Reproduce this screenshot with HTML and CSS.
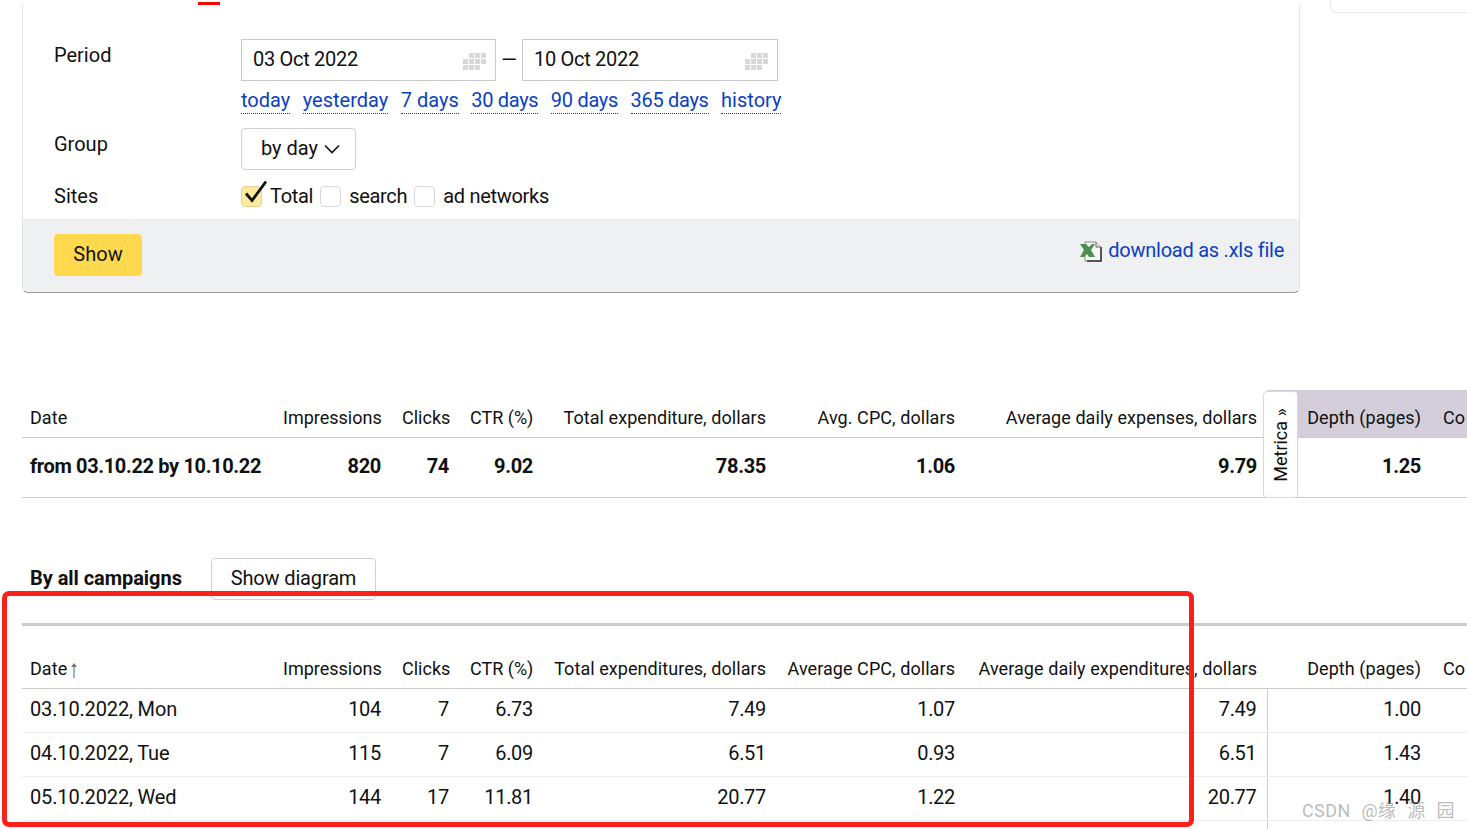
FILE: index.html
```html
<!DOCTYPE html>
<html lang="en">
<head>
<meta charset="utf-8">
<title>Statistics</title>
<link rel="stylesheet" href="styles.css">
</head>
<body>
<div class="page">
  <div class="tab-mark"></div>
  <div class="side-box"></div>
  <section class="panel">
    <div class="form">
      <div class="row row-period">
        <div class="label">Period</div>
        <div class="field">
          <div class="dates">
            <div class="date-input"><span>03 Oct 2022</span>
              <svg class="cal" width="23" height="17" viewBox="0 0 23 17"><path d="M6 0h5v5H6zM12 0h5v5h-5zM18 0h5v5h-5zM0 6h5v5H0zM6 6h5v5H6zM12 6h5v5h-5zM18 6h5v5h-5zM0 12h5v5H0zM6 12h5v5H6zM12 12h5v5h-5z" fill="#d8d8d8"/></svg>
            </div>
            <span class="dash">—</span>
            <div class="date-input"><span>10 Oct 2022</span>
              <svg class="cal" width="23" height="17" viewBox="0 0 23 17"><path d="M6 0h5v5H6zM12 0h5v5h-5zM18 0h5v5h-5zM0 6h5v5H0zM6 6h5v5H6zM12 6h5v5h-5zM18 6h5v5h-5zM0 12h5v5H0zM6 12h5v5H6zM12 12h5v5h-5z" fill="#d8d8d8"/></svg>
            </div>
          </div>
          <div class="quick">
            <a class="dotted">today</a><a class="dotted">yesterday</a><a class="dotted">7 days</a><a class="dotted num">30 days</a><a class="dotted num">90 days</a><a class="dotted num">365 days</a><a class="dotted">history</a>
          </div>
        </div>
      </div>
      <div class="row row-group">
        <div class="label">Group</div>
        <div class="field">
          <div class="select">by day
            <svg width="16" height="10" viewBox="0 0 16 10"><path d="M1 1.500l7 7 7-7" fill="none" stroke="#111" stroke-width="1.600"/></svg>
          </div>
        </div>
      </div>
      <div class="row row-sites">
        <div class="label">Sites</div>
        <div class="field checks">
          <span class="box box-on">
            <svg class="tick" width="27" height="28" viewBox="0 0 27 28"><path d="M5 13.500l6 7L25 1.500" fill="none" stroke="#111" stroke-width="2.800"/></svg>
          </span><span class="check-text">Total</span>
          <span class="box"></span><span class="check-text">search</span>
          <span class="box"></span><span class="check-text">ad networks</span>
        </div>
      </div>
    </div>
    <div class="footer">
      <button class="show">Show</button>
      <div class="download">
        <svg width="22" height="21" viewBox="0 0 22 21"><path d="M5 1h11l5 5v14H5z" fill="#f6f6f6" stroke="#8a8a8a"/><path d="M21 6v14H7" fill="none" stroke="#333" stroke-width="1.500"/><path d="M16 1v5h5" fill="#e4e4e4" stroke="#666"/><path d="M0 3h6l3 3 3-3h3l-4 6 4 7H9l-2-3-3 3H0l4-7z" fill="#4a8f4e"/></svg>
        <a class="link">download as .xls file</a>
      </div>
    </div>
  </section>

  <div class="summary">
    <table class="stats">
      <colgroup><col class="c1"><col class="c2"><col class="c3"><col class="c4"><col class="c5"><col class="c6"><col class="c7"><col class="c8"><col class="c9"></colgroup>
      <thead>
        <tr><th class="left">Date</th><th class="tight">Impressions</th><th class="tight">Clicks</th><th class="tight">CTR (%)</th><th>Total expenditure, dollars</th><th>Avg. CPC, dollars</th><th class="pre">Average daily expenses, dollars</th><th class="metrica-col">Depth (pages)</th><th class="metrica-col left">Co</th></tr>
      </thead>
      <tbody>
        <tr class="total"><td class="left">from 03.10.22 by 10.10.22</td><td>820</td><td>74</td><td>9.02</td><td>78.35</td><td>1.06</td><td class="pre">9.79</td><td>1.25</td><td></td></tr>
      </tbody>
    </table>
    <div class="metrica"><span>Metrica »</span></div>
  </div>

  <div class="campaigns-head">
    <h2>By all campaigns</h2>
    <button class="diagram">Show diagram</button>
  </div>
  <div class="rule"></div>
  <table class="stats detail">
    <colgroup><col class="c1"><col class="c2"><col class="c3"><col class="c4"><col class="c5"><col class="c6"><col class="c7"><col class="c8"><col class="c9"></colgroup>
    <thead>
      <tr><th class="left">Date <svg class="arrow" width="8" height="16" viewBox="0 0 8 16"><path d="M4 3v13" stroke="#8fb5d8" stroke-width="2"/><path d="M1 5l3-4 3 4z" fill="#777"/></svg></th><th class="tight">Impressions</th><th class="tight">Clicks</th><th class="tight">CTR (%)</th><th>Total expenditures, dollars</th><th>Average CPC, dollars</th><th class="pre">Average daily expenditures, dollars</th><th>Depth (pages)</th><th class="left last">Co</th></tr>
    </thead>
    <tbody>
      <tr><td class="left">03.10.2022, Mon</td><td>104</td><td>7</td><td>6.73</td><td>7.49</td><td>1.07</td><td class="pre split">7.49</td><td>1.00</td><td></td></tr>
      <tr><td class="left">04.10.2022, Tue</td><td>115</td><td>7</td><td>6.09</td><td>6.51</td><td>0.93</td><td class="pre split">6.51</td><td>1.43</td><td></td></tr>
      <tr><td class="left">05.10.2022, Wed</td><td>144</td><td>17</td><td>11.81</td><td>20.77</td><td>1.22</td><td class="pre split">20.77</td><td>1.40</td><td></td></tr>
      <tr><td></td><td></td><td></td><td></td><td></td><td></td><td class="pre split"></td><td></td><td></td></tr>
    </tbody>
  </table>

  <div class="highlight"></div>
  <div class="watermark">CSDN @缘 源 园</div>
</div>
</body>
</html>
```

FILE: styles.css
```css
html, body {
  margin: 0;
  padding: 0;
  background: #fff;
}
body {
  font-family: Roboto, "Noto Sans CJK SC", sans-serif;
  font-size: 20px;
  color: #111;
}
.page {
  position: relative;
  width: 1467px;
  height: 829px;
  overflow: hidden;
  padding-top: 5px;
  box-sizing: border-box;
}
.tab-mark {
  position: absolute;
  left: 198px;
  top: 2px;
  width: 22px;
  height: 3px;
  background: #f00;
}
.side-box {
  position: absolute;
  left: 1330px;
  top: -10px;
  width: 160px;
  height: 21px;
  border: 1px solid #e6e6e6;
  border-radius: 6px;
}
.panel {
  margin-left: 22px;
  width: 1278px;
  height: 288px;
  box-sizing: border-box;
  border-left: 1px solid #e2e2e2;
  border-right: 1px solid #e2e2e2;
  border-bottom: 1px solid #999;
  border-radius: 0 0 6px 6px;
  display: flex;
  flex-direction: column;
}
.form {
  flex: 0 0 214px;
  padding-left: 31px;
  box-sizing: border-box;
}
.row {
  display: flex;
}
.label {
  width: 187px;
  flex: none;
  line-height: 26px;
}
.row-period { padding-top: 34px; height: 123px; box-sizing: border-box; }
.row-period .label { margin-top: 3px; }
.row-group { height: 52px; }
.row-group .label { margin-top: 3px; }
.dates {
  display: flex;
  align-items: center;
}
.date-input {
  width: 255px;
  height: 42px;
  box-sizing: border-box;
  border: 1px solid #c9c9c9;
  padding: 0 9px 2px 11px;
  display: flex;
  align-items: center;
  justify-content: space-between;
  line-height: 38px;
  letter-spacing: -0.3px;
}
.date-input + .dash + .date-input { width: 256px; }
.cal { margin-top: 5px; }
.dash {
  width: 26px;
  text-align: center;
}
.quick {
  display: flex;
  gap: 12.500px;
  margin-top: 7px;
}
.dotted {
  color: #0a3fc0;
  line-height: 24px;
  border-bottom: 1px dotted #0a3fc0;
  height: 25px;
}
.num { letter-spacing: -0.3px; }
.select {
  width: 115px;
  height: 42px;
  box-sizing: border-box;
  border: 1px solid #cfcfcf;
  border-radius: 4px;
  padding: 0 0 2px 19px;
  display: flex;
  align-items: center;
  gap: 6px;
}
.select svg { margin-top: 2px; }
.checks {
  display: flex;
  align-items: center;
  height: 32px;
}
.row-sites .label { line-height: 32px; }
.box {
  position: relative;
  width: 21px;
  height: 21px;
  box-sizing: border-box;
  border: 1px solid #d8d8d8;
  border-radius: 4px;
  flex: none;
}
.box-on {
  background: #ffeba0;
  border-color: #e3d290;
}
.tick {
  position: absolute;
  left: -1px;
  top: -7px;
}
.check-text {
  margin: 0 7px 0 8px;
  letter-spacing: -0.3px;
}
.footer {
  flex: 1;
  background: #eff0f2;
  border-radius: 0 0 6px 6px;
  padding: 15px 15px 0 31px;
  display: flex;
  justify-content: space-between;
  align-items: flex-start;
}
.show {
  width: 88px;
  height: 42px;
  border: 0;
  border-radius: 4px;
  background: #ffd94d;
  font: inherit;
  color: #111;
  padding: 0 0 2px;
}
.download {
  display: flex;
  align-items: center;
  gap: 6px;
  height: 32px;
}
.download svg { margin-top: 3px; }
.link { color: #0a3fc0; letter-spacing: -0.25px; }

.summary {
  position: relative;
  margin-top: 97px;
  margin-left: 22px;
}
.stats {
  table-layout: fixed;
  border-collapse: collapse;
  width: 1478px;
  font-size: 18px;
}
.c1 { width: 251px; }
.c2 { width: 119px; }
.c3 { width: 68px; }
.c4 { width: 84px; }
.c5 { width: 233px; }
.c6 { width: 189px; }
.c7 { width: 301px; }
.c8 { width: 165px; }
.c9 { width: 68px; }
.stats th, .stats td {
  padding: 0 11px 0 10px;
  text-align: right;
  white-space: nowrap;
  overflow: hidden;
}
.stats th {
  font-weight: 400;
  height: 47px;
  padding-top: 8px;
  box-sizing: border-box;
  border-bottom: 1px solid #ccc;
  letter-spacing: 0.06px;
}
.stats td { letter-spacing: -0.3px; }
.stats td.left { letter-spacing: -0.15px; }
.stats .pre { padding-right: 10px; }
.stats th.tight { padding-right: 12px; letter-spacing: 0; }
.stats .left {
  text-align: left;
  padding-left: 8px;
}
.metrica-col { background: #d3ced9; }
.stats th.metrica-col.left, .stats th.last { padding-left: 11px; }
.total td {
  font-weight: 700;
  font-size: 20px;
  height: 60px;
  box-sizing: border-box;
  border-bottom: 1px solid #ccc;
  padding-bottom: 2px;
}
.total td.left { letter-spacing: -0.35px; }
.metrica {
  position: absolute;
  left: 1241px;
  top: 1px;
  width: 35px;
  height: 107px;
  box-sizing: border-box;
  background: #fff;
  border: 1px solid #d8d8d8;
  border-radius: 4px;
  display: flex;
  align-items: center;
  justify-content: center;
}
.metrica span {
  writing-mode: vertical-rl;
  transform: rotate(180deg);
  font-size: 18px;
}
.campaigns-head {
  display: flex;
  align-items: center;
  margin: 60px 0 0 30px;
  height: 42px;
}
.campaigns-head h2 {
  margin: 0 0 2px;
  font-size: 20px;
  font-weight: 700;
  width: 181px;
  flex: none;
  letter-spacing: -0.05px;
}
.diagram {
  width: 165px;
  height: 42px;
  background: #fff;
  border: 1px solid #cfcfcf;
  border-radius: 4px;
  font: inherit;
  color: #111;
  padding: 0 0 2px;
  letter-spacing: -0.15px;
}
.rule {
  margin: 23px 0 0 22px;
  height: 3px;
  background: #ccc;
}
.detail {
  margin-left: 22px;
}
.detail th {
  height: 63px;
  padding-top: 24px;
}
.detail td {
  height: 44px;
  box-sizing: border-box;
  font-size: 20px;
  border-bottom: 1px solid #ebebf2;
  padding-bottom: 3px;
}
.detail .split { border-right: 1px solid #ccc; }
.arrow {
  vertical-align: -3px;
  margin-left: -2px;
}
.highlight {
  position: absolute;
  left: 2px;
  top: 591px;
  width: 1192px;
  height: 236px;
  box-sizing: border-box;
  border: 5px solid #fb2019;
  border-radius: 7px;
  pointer-events: none;
}
.watermark {
  position: absolute;
  left: 1302px;
  top: 800px;
  font-size: 18px;
  line-height: 21px;
  color: rgba(130, 130, 130, 0.55);
  letter-spacing: 0.4px;
  word-spacing: 6px;
  white-space: nowrap;
}
```
